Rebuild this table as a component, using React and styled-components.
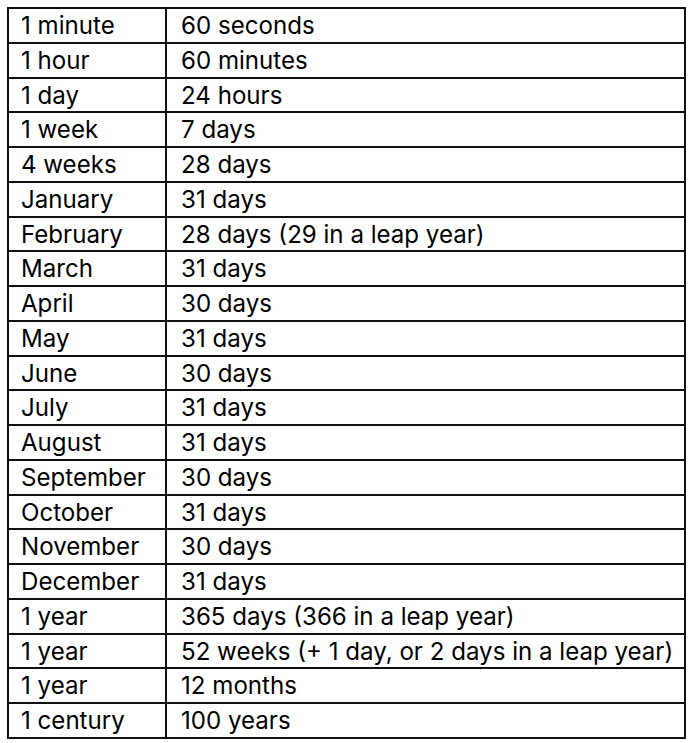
import React from "react";
import styled, { createGlobalStyle } from "styled-components";

const Global = createGlobalStyle`
  html, body { margin: 0; padding: 0; background: #ffffff; }
  body { font-family: Inter, "Noto Sans", sans-serif; color: #000; }
`;

const Page = styled.div`
  padding: 7px 0 0 7px;
`;

const Table = styled.div`
  display: grid;
  grid-template-columns: 158px 519px;
  grid-auto-rows: 34.76px;
  width: max-content;
  border-top: 2px solid #111;
  border-left: 2px solid #111;
`;

const Cell = styled.div`
  box-sizing: border-box;
  border-right: 2px solid #111;
  border-bottom: 2px solid #111;
  padding-left: ${(p) => (p.$first ? "12px" : "14px")};
  font-size: 24.1px;
  line-height: 33px;
  white-space: nowrap;
  letter-spacing: 0;
`;

const rows = [
  ["1 minute", "60 seconds"],
  ["1 hour", "60 minutes"],
  ["1 day", "24 hours"],
  ["1 week", "7 days"],
  ["4 weeks", "28 days"],
  ["January", "31 days"],
  ["February", "28 days (29 in a leap year)"],
  ["March", "31 days"],
  ["April", "30 days"],
  ["May", "31 days"],
  ["June", "30 days"],
  ["July", "31 days"],
  ["August", "31 days"],
  ["September", "30 days"],
  ["October", "31 days"],
  ["November", "30 days"],
  ["December", "31 days"],
  ["1 year", "365 days (366 in a leap year)"],
  ["1 year", "52 weeks (+ 1 day, or 2 days in a leap year)"],
  ["1 year", "12 months"],
  ["1 century", "100 years"],
];

export default function App() {
  return (
    <>
      <Global />
      <Page>
        <Table>
          {rows.map(([a, b], i) => (
            <React.Fragment key={i}>
              <Cell $first>{a}</Cell>
              <Cell>{b}</Cell>
            </React.Fragment>
          ))}
        </Table>
      </Page>
    </>
  );
}
